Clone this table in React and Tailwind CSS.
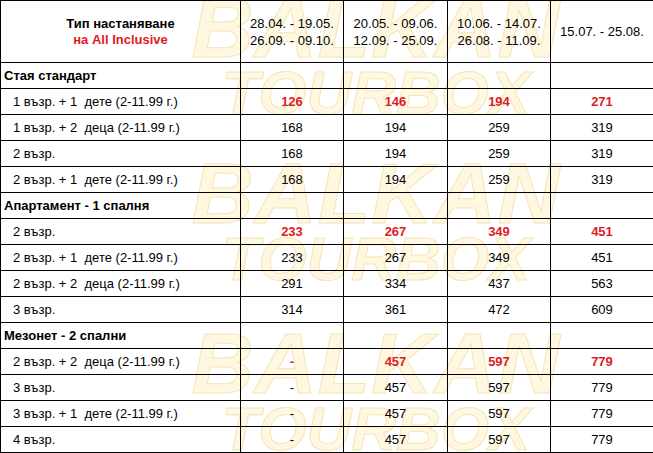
import React from 'react';

const sections = [
  {
    title: 'Стая стандарт',
    rows: [
      { label: '1 възр. + 1  дете (2-11.99 г.)', prices: ['126', '146', '194', '271'], red: true },
      { label: '1 възр. + 2  деца (2-11.99 г.)', prices: ['168', '194', '259', '319'] },
      { label: '2 възр.', prices: ['168', '194', '259', '319'] },
      { label: '2 възр. + 1  дете (2-11.99 г.)', prices: ['168', '194', '259', '319'] },
    ],
  },
  {
    title: 'Апартамент - 1 спалня',
    rows: [
      { label: '2 възр.', prices: ['233', '267', '349', '451'], red: true },
      { label: '2 възр. + 1  дете (2-11.99 г.)', prices: ['233', '267', '349', '451'] },
      { label: '2 възр. + 2  деца (2-11.99 г.)', prices: ['291', '334', '437', '563'] },
      { label: '3 възр.', prices: ['314', '361', '472', '609'] },
    ],
  },
  {
    title: 'Мезонет - 2 спални',
    rows: [
      { label: '2 възр. + 2  деца (2-11.99 г.)', prices: ['-', '457', '597', '779'], red: true },
      { label: '3 възр.', prices: ['-', '457', '597', '779'] },
      { label: '3 възр. + 1  дете (2-11.99 г.)', prices: ['-', '457', '597', '779'] },
      { label: '4 възр.', prices: ['-', '457', '597', '779'] },
    ],
  },
];

const periods = [
  ['28.04. - 19.05.', '26.09. - 09.10.'],
  ['20.05. - 09.06.', '12.09. - 25.09.'],
  ['10.06. - 14.07.', '26.08. - 11.09.'],
  ['15.07. - 25.08.'],
];

const cell = 'border border-black p-0';

// faint logo watermark behind the price table
const Watermark = ({ top }) => (
  <div
    aria-hidden="true"
    className="absolute left-[184px] w-[384px] flex flex-col items-center italic font-black leading-none text-[#fff8e0] [-webkit-text-stroke:1px_#f7e4b8] select-none pointer-events-none"
    style={{ top }}
  >
    <span className="text-[86px] tracking-[1px]">BALKAN</span>
    <span className="text-[62px] -mt-[8px]">TOURBOX</span>
  </div>
);

const App = () => {
  return (
    <div className="relative w-[653px] h-[453px] overflow-hidden bg-white font-['Liberation_Sans',Arial,sans-serif] text-[13px] text-black">
      <Watermark top={-16} />
      <Watermark top={150} />
      <Watermark top={320} />

      <table className="relative border-collapse w-[653px] table-fixed">
        <colgroup>
          <col className="w-[240px]" />
          <col className="w-[103px]" />
          <col className="w-[104px]" />
          <col className="w-[103px]" />
          <col className="w-[103px]" />
        </colgroup>
        <thead>
          <tr className="h-[62px]">
            <th className={`${cell} text-center font-bold leading-[16px]`}>
              <div>Тип настаняване</div>
              <div className="text-[#de1b25]">на All Inclusive</div>
            </th>
            {periods.map((p, i) => (
              <th key={i} className={`${cell} text-center font-normal leading-[17px]`}>
                {p.map((line) => (
                  <div key={line}>{line}</div>
                ))}
              </th>
            ))}
          </tr>
        </thead>
        <tbody>
          {sections.map((s) => (
            <React.Fragment key={s.title}>
              <tr className="h-[26px]">
                <td className={`${cell} pl-[3px] font-bold`}>{s.title}</td>
                <td className={cell}></td>
                <td className={cell}></td>
                <td className={cell}></td>
                <td className={cell}></td>
              </tr>
              {s.rows.map((r, idx) => (
                <tr key={idx} className="h-[26px]">
                  <td className={`${cell} pl-[12px] whitespace-pre`}>{r.label}</td>
                  {r.prices.map((p, j) => (
                    <td
                      key={j}
                      className={`${cell} text-center ${r.red ? 'text-[#de1b25] font-bold' : ''}`}
                    >
                      {p}
                    </td>
                  ))}
                </tr>
              ))}
            </React.Fragment>
          ))}
        </tbody>
      </table>
    </div>
  );
};

export default App;
